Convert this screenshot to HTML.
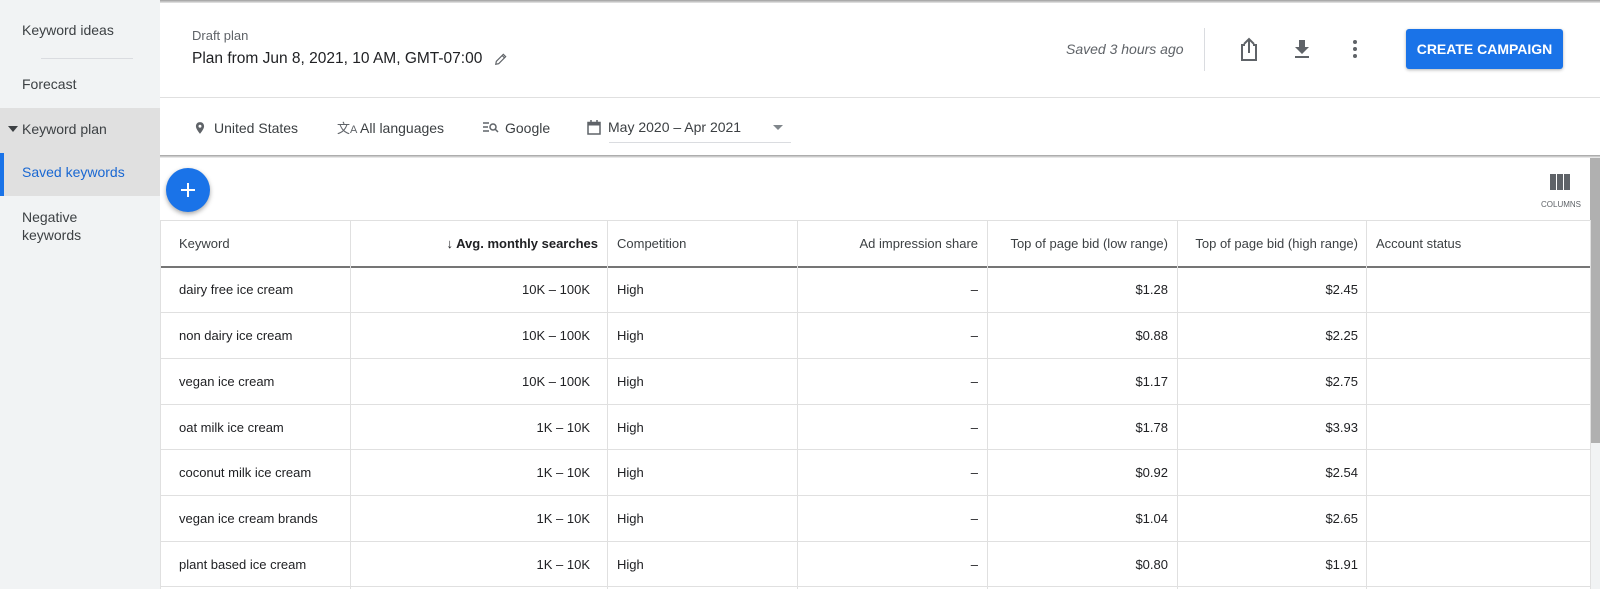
<!DOCTYPE html>
<html><head><meta charset="utf-8"><style>
*{box-sizing:border-box;margin:0;padding:0}
body{width:1600px;height:589px;overflow:hidden;font-family:"Liberation Sans",sans-serif;background:#fff;position:relative;color:#202124}
.a{position:absolute;white-space:nowrap}
#side{position:absolute;left:0;top:0;width:160px;height:589px;background:#f1f3f4}
.si{position:absolute;left:22px;font-size:14px;color:#3c4043}
.c{position:absolute;top:0;width:1px;background:#e0e0e0}
.rw{position:absolute;left:160px;width:1430px;height:1px;background:#e0e0e0}
.t{position:absolute;font-size:13px;color:#202124;white-space:nowrap}
.r{text-align:right}
</style></head><body>
<div style="position:absolute;left:0;top:0;width:1600px;height:3px;background:linear-gradient(#9e9e9e,#e8e8e8)"></div>
<div id="side">
<div class="si" style="top:22px">Keyword ideas</div>
<div style="position:absolute;left:41px;top:58px;width:92px;height:1px;background:#dadce0"></div>
<div class="si" style="top:76px">Forecast</div>
<div style="position:absolute;left:0;top:108px;width:160px;height:88px;background:#e0e0e0"></div>
<div class="a" style="left:8px;top:126px;width:0;height:0;border-left:5px solid transparent;border-right:5px solid transparent;border-top:6px solid #3c4043"></div>
<div class="si" style="top:121px">Keyword plan</div>
<div style="position:absolute;left:0;top:153px;width:4px;height:43px;background:#1a73e8"></div>
<div class="si" style="top:164px;color:#1967d2">Saved keywords</div>
<div class="si" style="top:208px;line-height:18px">Negative<br>keywords</div>
</div>
<!-- header -->
<div class="a" style="left:192px;top:28px;font-size:13px;color:#5f6368">Draft plan</div>
<div class="a" style="left:192px;top:50px;font-size:15.5px;color:#202124">Plan from Jun 8, 2021, 10 AM, GMT-07:00</div>
<svg class="a" style="left:494px;top:52px" width="14" height="14" viewBox="0 0 24 24"><path d="M3 21l1-5L16 4l4 4L8 20z M14 6l4 4" fill="none" stroke="#5f6368" stroke-width="2"/></svg>
<div class="a" style="left:1066px;top:41px;font-size:14px;font-style:italic;color:#5f6368">Saved 3 hours ago</div>
<div class="a" style="left:1204px;top:28px;width:1px;height:43px;background:#dadce0"></div>
<svg class="a" style="left:1237px;top:36px" width="24" height="26" viewBox="0 0 24 26"><path d="M8 9H5v15h14V9h-3" fill="none" stroke="#5f6368" stroke-width="2"/><path d="M12 17V3M7 8l5-5 5 5" fill="none" stroke="#5f6368" stroke-width="2"/></svg>
<svg class="a" style="left:1290px;top:37px" width="24" height="24" viewBox="0 0 24 24"><path d="M9 3h6v7h4l-7 7-7-7h4z" fill="#5f6368"/><rect x="5" y="19" width="14" height="2" fill="#5f6368"/></svg>
<svg class="a" style="left:1343px;top:37px" width="24" height="24" viewBox="0 0 24 24"><circle cx="12" cy="5" r="2" fill="#5f6368"/><circle cx="12" cy="12" r="2" fill="#5f6368"/><circle cx="12" cy="19" r="2" fill="#5f6368"/></svg>
<div class="a" style="left:1406px;top:29px;width:157px;height:40px;background:#1a73e8;border-radius:3px;box-shadow:0 1px 3px rgba(0,0,0,.3);color:#fff;font-size:14px;font-weight:bold;line-height:40px;text-align:center">CREATE CAMPAIGN</div>
<div class="a" style="left:160px;top:97px;width:1440px;height:1px;background:#e0e0e0"></div>
<!-- filters -->
<svg class="a" style="left:193px;top:119px" width="14" height="18" viewBox="0 0 24 24"><path d="M12 2C8 2 5 5 5 9c0 5 7 13 7 13s7-8 7-13c0-4-3-7-7-7zm0 9.5a2.5 2.5 0 110-5 2.5 2.5 0 010 5z" fill="#5f6368"/></svg>
<div class="a" style="left:214px;top:120px;font-size:14px;color:#3c4043">United States</div>
<div class="a" style="left:337px;top:118px;font-size:13px;color:#5f6368">文<span style="font-size:11px">A</span></div>
<div class="a" style="left:360px;top:120px;font-size:14px;color:#3c4043">All languages</div>
<svg class="a" style="left:483px;top:121px" width="16" height="12" viewBox="0 0 16 12"><path d="M0 2h6M0 6h5M0 10h6" stroke="#5f6368" stroke-width="1.5"/><circle cx="10" cy="6" r="3" fill="none" stroke="#5f6368" stroke-width="1.5"/><path d="M12 8l3 3" stroke="#5f6368" stroke-width="1.5"/></svg>
<div class="a" style="left:505px;top:120px;font-size:14px;color:#3c4043">Google</div>
<svg class="a" style="left:587px;top:120px" width="14" height="15" viewBox="0 0 14 15"><rect x="1" y="2.5" width="12" height="11.5" fill="none" stroke="#5f6368" stroke-width="1.5"/><rect x="1" y="2.5" width="12" height="3" fill="#5f6368"/><path d="M4 0v3M10 0v3" stroke="#5f6368" stroke-width="1.5"/></svg>
<div class="a" style="left:608px;top:119px;font-size:14px;color:#3c4043">May 2020 – Apr 2021</div>
<div class="a" style="left:773px;top:125px;width:0;height:0;border-left:5px solid transparent;border-right:5px solid transparent;border-top:5px solid #80868b"></div>
<div class="a" style="left:609px;top:142px;width:182px;height:1px;background:#dadce0"></div>
<div class="a" style="left:160px;top:155px;width:1440px;height:3px;background:linear-gradient(#9e9e9e,#f5f5f5)"></div>
<!-- FAB -->
<div class="a" style="left:166px;top:168px;width:44px;height:44px;border-radius:50%;background:#1a73e8;box-shadow:0 2px 5px rgba(0,0,0,.35)"></div>
<div class="a" style="left:181px;top:189px;width:14px;height:2px;background:#fff"></div>
<div class="a" style="left:187px;top:183px;width:2px;height:14px;background:#fff"></div>
<!-- columns icon -->
<div class="a" style="left:1550px;top:174px;width:20px;height:16px;background:#5f6368"></div>
<div class="a" style="left:1556px;top:174px;width:1px;height:16px;background:#fff"></div>
<div class="a" style="left:1563px;top:174px;width:1px;height:16px;background:#fff"></div>
<div class="a" style="left:1541px;top:200px;font-size:8px;color:#5f6368">COLUMNS</div>
<!-- scrollbar -->
<div class="a" style="left:1590px;top:158px;width:10px;height:431px;background:#f1f3f4"></div>
<div class="a" style="left:1590px;top:158px;width:10px;height:285px;background:#b0b0b0"></div>
<!-- table -->
<div class="rw" style="top:220px"></div>
<div class="rw" style="top:266px;height:2px;background:#757575"></div>
<div class="rw" style="top:312px"></div><div class="rw" style="top:358px"></div><div class="rw" style="top:404px"></div><div class="rw" style="top:449px"></div><div class="rw" style="top:495px"></div><div class="rw" style="top:541px"></div><div class="rw" style="top:586px"></div>
<div class="c" style="left:160px;top:220px;height:369px"></div>
<div class="c" style="left:350px;top:220px;height:369px"></div>
<div class="c" style="left:607px;top:220px;height:369px"></div>
<div class="c" style="left:797px;top:220px;height:369px"></div>
<div class="c" style="left:987px;top:220px;height:369px"></div>
<div class="c" style="left:1177px;top:220px;height:369px"></div>
<div class="c" style="left:1366px;top:220px;height:369px"></div>
<div class="c" style="left:1590px;top:220px;height:369px"></div>
<div class="t" style="left:179px;top:236px;color:#3c4043">Keyword</div>
<div class="t r" style="left:350px;width:248px;top:236px;font-weight:bold">↓ Avg. monthly searches</div>
<div class="t" style="left:617px;top:236px;color:#3c4043">Competition</div>
<div class="t r" style="left:797px;width:181px;top:236px;color:#3c4043">Ad impression share</div>
<div class="t r" style="left:987px;width:181px;top:236px;color:#3c4043">Top of page bid (low range)</div>
<div class="t r" style="left:1177px;width:181px;top:236px;color:#3c4043">Top of page bid (high range)</div>
<div class="t" style="left:1376px;top:236px;color:#3c4043">Account status</div>
<div id="rows"></div>
<script>
var d=[["dairy free ice cream","10K – 100K","$1.28","$2.45"],["non dairy ice cream","10K – 100K","$0.88","$2.25"],["vegan ice cream","10K – 100K","$1.17","$2.75"],["oat milk ice cream","1K – 10K","$1.78","$3.93"],["coconut milk ice cream","1K – 10K","$0.92","$2.54"],["vegan ice cream brands","1K – 10K","$1.04","$2.65"],["plant based ice cream","1K – 10K","$0.80","$1.91"]];
var tops=[282,328,374,420,465,511,557],h="";
d.forEach(function(r,i){var y=tops[i];
h+='<div class="t" style="left:179px;top:'+y+'px">'+r[0]+'</div>'+
'<div class="t r" style="left:350px;width:240px;top:'+y+'px">'+r[1]+'</div>'+
'<div class="t" style="left:617px;top:'+y+'px">High</div>'+
'<div class="t r" style="left:797px;width:181px;top:'+y+'px">–</div>'+
'<div class="t r" style="left:987px;width:181px;top:'+y+'px">'+r[2]+'</div>'+
'<div class="t r" style="left:1177px;width:181px;top:'+y+'px">'+r[3]+'</div>';});
document.getElementById("rows").innerHTML=h;
</script>
</body></html>
